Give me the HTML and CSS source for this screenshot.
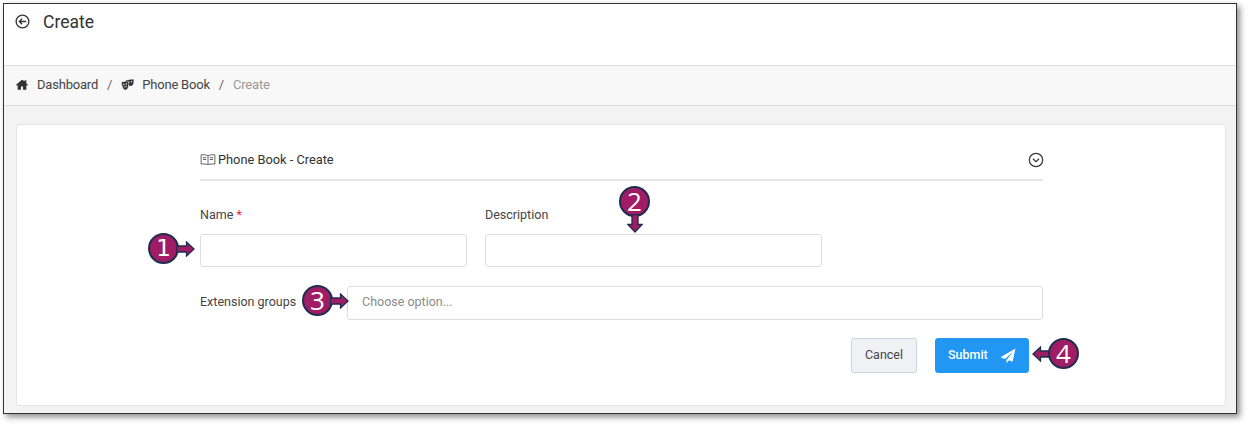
FILE: index.html
```html
<!DOCTYPE html>
<html lang="en">
<head>
<meta charset="utf-8">
<title>Phone Book - Create</title>
<link rel="stylesheet" href="styles.css">
</head>
<body>
<div class="frame">
  <header class="page-head">
    <svg class="back-icon" viewBox="0 0 16 16" width="15" height="15"><circle cx="8" cy="8" r="6.8"/><path d="M12 8H4.600M7.600 5 4.600 8l3 3"/></svg>
    <h1 class="page-title">Create</h1>
  </header>
  <nav class="crumbs">
    <svg class="crumb-icon" viewBox="0 0 16 14" width="12" height="11"><path d="M8 .6 0 7.400l1 1.200 1.200-1V14h4.400V9.600h2.800V14h4.400V7.600l1.200 1 1-1.200-2.200-1.900V1.400h-2.200v1.400z"/></svg>
    <span class="crumb crumb-first">Dashboard</span>
    <span class="sep">/</span>
    <svg class="crumb-icon masks" viewBox="0 0 14 13" width="13" height="12"><path d="M5 1.400 13.400.2c.5 3 .4 6.200-2.500 7.300L9 7.200z"/><circle cx="8.600" cy="3.400" r=".7" fill="#fff"/><circle cx="11.400" cy="3" r=".7" fill="#fff"/><path d="M.4 3.200 7.600 2c1 3.400 1.200 8-2.200 10C2 12.600.6 7 .4 3.200z" stroke="#fff" stroke-width=".5"/><circle cx="3" cy="6" r=".8" fill="#fff"/><circle cx="5.800" cy="5.500" r=".8" fill="#fff"/><path d="M3 9c1-.8 2.200-1 3.400-.6" stroke="#fff" stroke-width=".8" fill="none"/></svg>
    <span class="crumb">Phone Book</span>
    <span class="sep">/</span>
    <span class="crumb current">Create</span>
  </nav>
  <main class="content">
    <section class="card">
      <div class="form-wrap">
        <div class="form-title">
          <svg class="book-icon" viewBox="0 0 17 12" width="16" height="11"><path d="M8.500 2C7 .9 4 .6 1 1v10c3-.4 6-.1 7.500 1 1.500-1.100 4.500-1.400 7.500-1V1c-3-.4-6-.1-7.500 1zM8.500 2v10M3 4h3.500M3 6h3.500M10.500 4H14M10.500 6H14"/></svg>
          <span class="title-text">Phone Book - Create</span>
          <svg class="chevron-icon" viewBox="0 0 16 16" width="16" height="16"><circle cx="8" cy="8" r="6.700"/><path d="m5 6.800 3 2.900 3-2.900"/></svg>
        </div>
        <div class="field-row">
          <div class="field name-field">
            <label class="field-label">Name <span class="req">*</span></label>
            <input class="text-input" type="text">
          </div>
          <div class="field desc-field">
            <label class="field-label">Description</label>
            <input class="text-input" type="text">
          </div>
        </div>
        <div class="group-row">
          <label class="field-label group-label">Extension groups</label>
          <div class="select-box">Choose option...</div>
        </div>
        <div class="actions">
          <button class="btn btn-cancel" type="button"><span class="btn-text">Cancel</span></button>
          <button class="btn btn-submit" type="button"><span class="btn-text">Submit</span>
            <svg viewBox="0 0 16 16" width="16" height="16"><path d="M15.500.6.500 9.200l4.600 1.900L13 3.600 6.500 12v3.300l2.600-3 3.500 1.500z" fill="#fff"/></svg>
          </button>
        </div>
      </div>
    </section>
  </main>
  <div class="marker m1"><span class="badge">1</span><svg class="arrow" viewBox="0 0 19 16" width="19" height="16"><path d="M.5 5h10V1l7.500 7-7.500 7v-4H.5z"/></svg></div>
  <div class="marker m2"><span class="badge">2</span><svg class="arrow" viewBox="0 0 16 19" width="16" height="19"><path d="M5 .5v10H1l7 7.500 7-7.500h-4V.5z"/></svg></div>
  <div class="marker m3"><span class="badge">3</span><svg class="arrow" viewBox="0 0 19 16" width="19" height="16"><path d="M.5 5h10V1l7.500 7-7.500 7v-4H.5z"/></svg></div>
  <div class="marker m4"><svg class="arrow" viewBox="0 0 19 16" width="19" height="16"><path d="M18.500 5h-10V1L1 8l7.500 7v-4h10z"/></svg><span class="badge">4</span></div>
</div>
</body>
</html>
```
FILE: styles.css
```css
* { box-sizing: border-box; }
html, body { margin: 0; padding: 0; background: #fff; overflow: hidden; }
body { width: 1251px; height: 430px; padding: 3px 0 0 3px; font-family: Roboto, "Liberation Sans", sans-serif; color: #333; }
.frame {
  position: relative;
  width: 1234px;
  height: 411px;
  border: 1px solid #333;
  background: #f3f3f3;
  display: flex;
  flex-direction: column;
  box-shadow: 3px 3px 6px rgba(0, 0, 0, .45);
}
.page-head {
  height: 62px;
  flex: none;
  background: #fff;
  border-bottom: 1px solid #ddd;
  display: flex;
  align-items: flex-start;
  padding: 10px 0 0 11px;
}
.back-icon { margin-top: 0; fill: none; stroke: #333; stroke-width: 1.400; }
.page-title { margin: 0 0 0 13px; font-size: 17.500px; line-height: 16px; font-weight: 400; color: #333; }
.crumbs {
  height: 40px;
  flex: none;
  background: #f8f8f8;
  border-bottom: 1px solid #ddd;
  display: flex;
  align-items: center;
  padding: 0 0 2px 12px;
  font-size: 13px;
  letter-spacing: -.2px;
}
.crumb-icon { fill: #333; flex: none; }
.crumb-first { margin-left: 9px; }
.crumb { color: #444; }
.masks + .crumb { margin-left: 8px; }
.sep { margin: 0 9px; color: #666; }
.current { color: #999; }
.content { flex: 1; padding: 18px 10px 7px 12px; }
.card {
  height: 282px;
  background: #fff;
  border: 1px solid #e4e4e4;
  border-radius: 3px;
  padding: 0 182px 0 183px;
}
.form-wrap { display: flex; flex-direction: column; }
.form-title {
  height: 56px;
  display: flex;
  align-items: center;
  padding-top: 14px;
  border-bottom: 2px solid #e6e6e6;
  font-size: 12.800px;
  color: #333;
}
.book-icon { fill: none; stroke: #555; stroke-width: 1; margin-right: 2px; }
.title-text { flex: 1; font-weight: 400; }
.chevron-icon { fill: none; stroke: #333; stroke-width: 1.200; margin-right: -1px; margin-top: 2px; }
.field-row { display: flex; gap: 18px; margin-top: 26px; }
.field { display: flex; flex-direction: column; }
.name-field { width: 267px; }
.desc-field { width: 337px; }
.field-label { font-size: 12.500px; line-height: 15px; color: #444; }
.req { color: #e8194b; }
.text-input {
  margin-top: 12px;
  height: 33px;
  background: #fff;
  border: 1px solid #ddd;
  border-radius: 3px;
  outline: none;
}
.group-row { display: flex; align-items: center; margin-top: 19px; }
.group-label { width: 147px; flex: none; margin-bottom: 4px; }
.select-box {
  flex: 1;
  height: 34px;
  border: 1px solid #ddd;
  border-radius: 3px;
  font-size: 12.500px;
  line-height: 29px;
  padding-left: 14px;
  color: #8a8a8a;
}
.actions { display: flex; justify-content: flex-end; gap: 18px; margin-top: 18px; padding-right: 14px; }
.btn { height: 35px; border-radius: 3px; font-family: inherit; font-size: 12.500px; padding: 0; }
.btn-text { position: relative; top: -1px; }
.btn-cancel { width: 66px; background: #f0f2f6; border: 1px solid #cfd4dc; color: #444; }
.btn-submit {
  width: 94px;
  background: #2196f3;
  border: 1px solid #2196f3;
  color: #fff;
  font-weight: 500;
  display: flex;
  align-items: center;
  justify-content: space-between;
  padding: 0 12px;
}
.marker { position: absolute; display: flex; align-items: center; }
.badge {
  width: 31px;
  height: 31px;
  border-radius: 50%;
  background: #a01c64;
  border: 2px solid #1f2d50;
  color: #fff;
  font-family: "Open Sans", sans-serif;
  font-size: 26px;
  line-height: 26px;
  text-align: center;
  flex: none;
}
.arrow { fill: #a01c64; stroke: #1f2d50; stroke-width: 1.300; flex: none; }
.m1 { left: 144px; top: 229px; }
.m1 .badge { font-family: "DejaVu Sans", sans-serif; font-size: 23px; }
.m1 .arrow { margin-left: -3px; }
.m2 { left: 615px; top: 182px; flex-direction: column; }
.m2 .arrow { margin-top: -3px; }
.m3 { left: 298px; top: 281px; }
.m3 .arrow { margin-left: -3px; }
.m4 { left: 1028px; top: 334px; }
.m4 .badge { margin-left: -3px; }
```
